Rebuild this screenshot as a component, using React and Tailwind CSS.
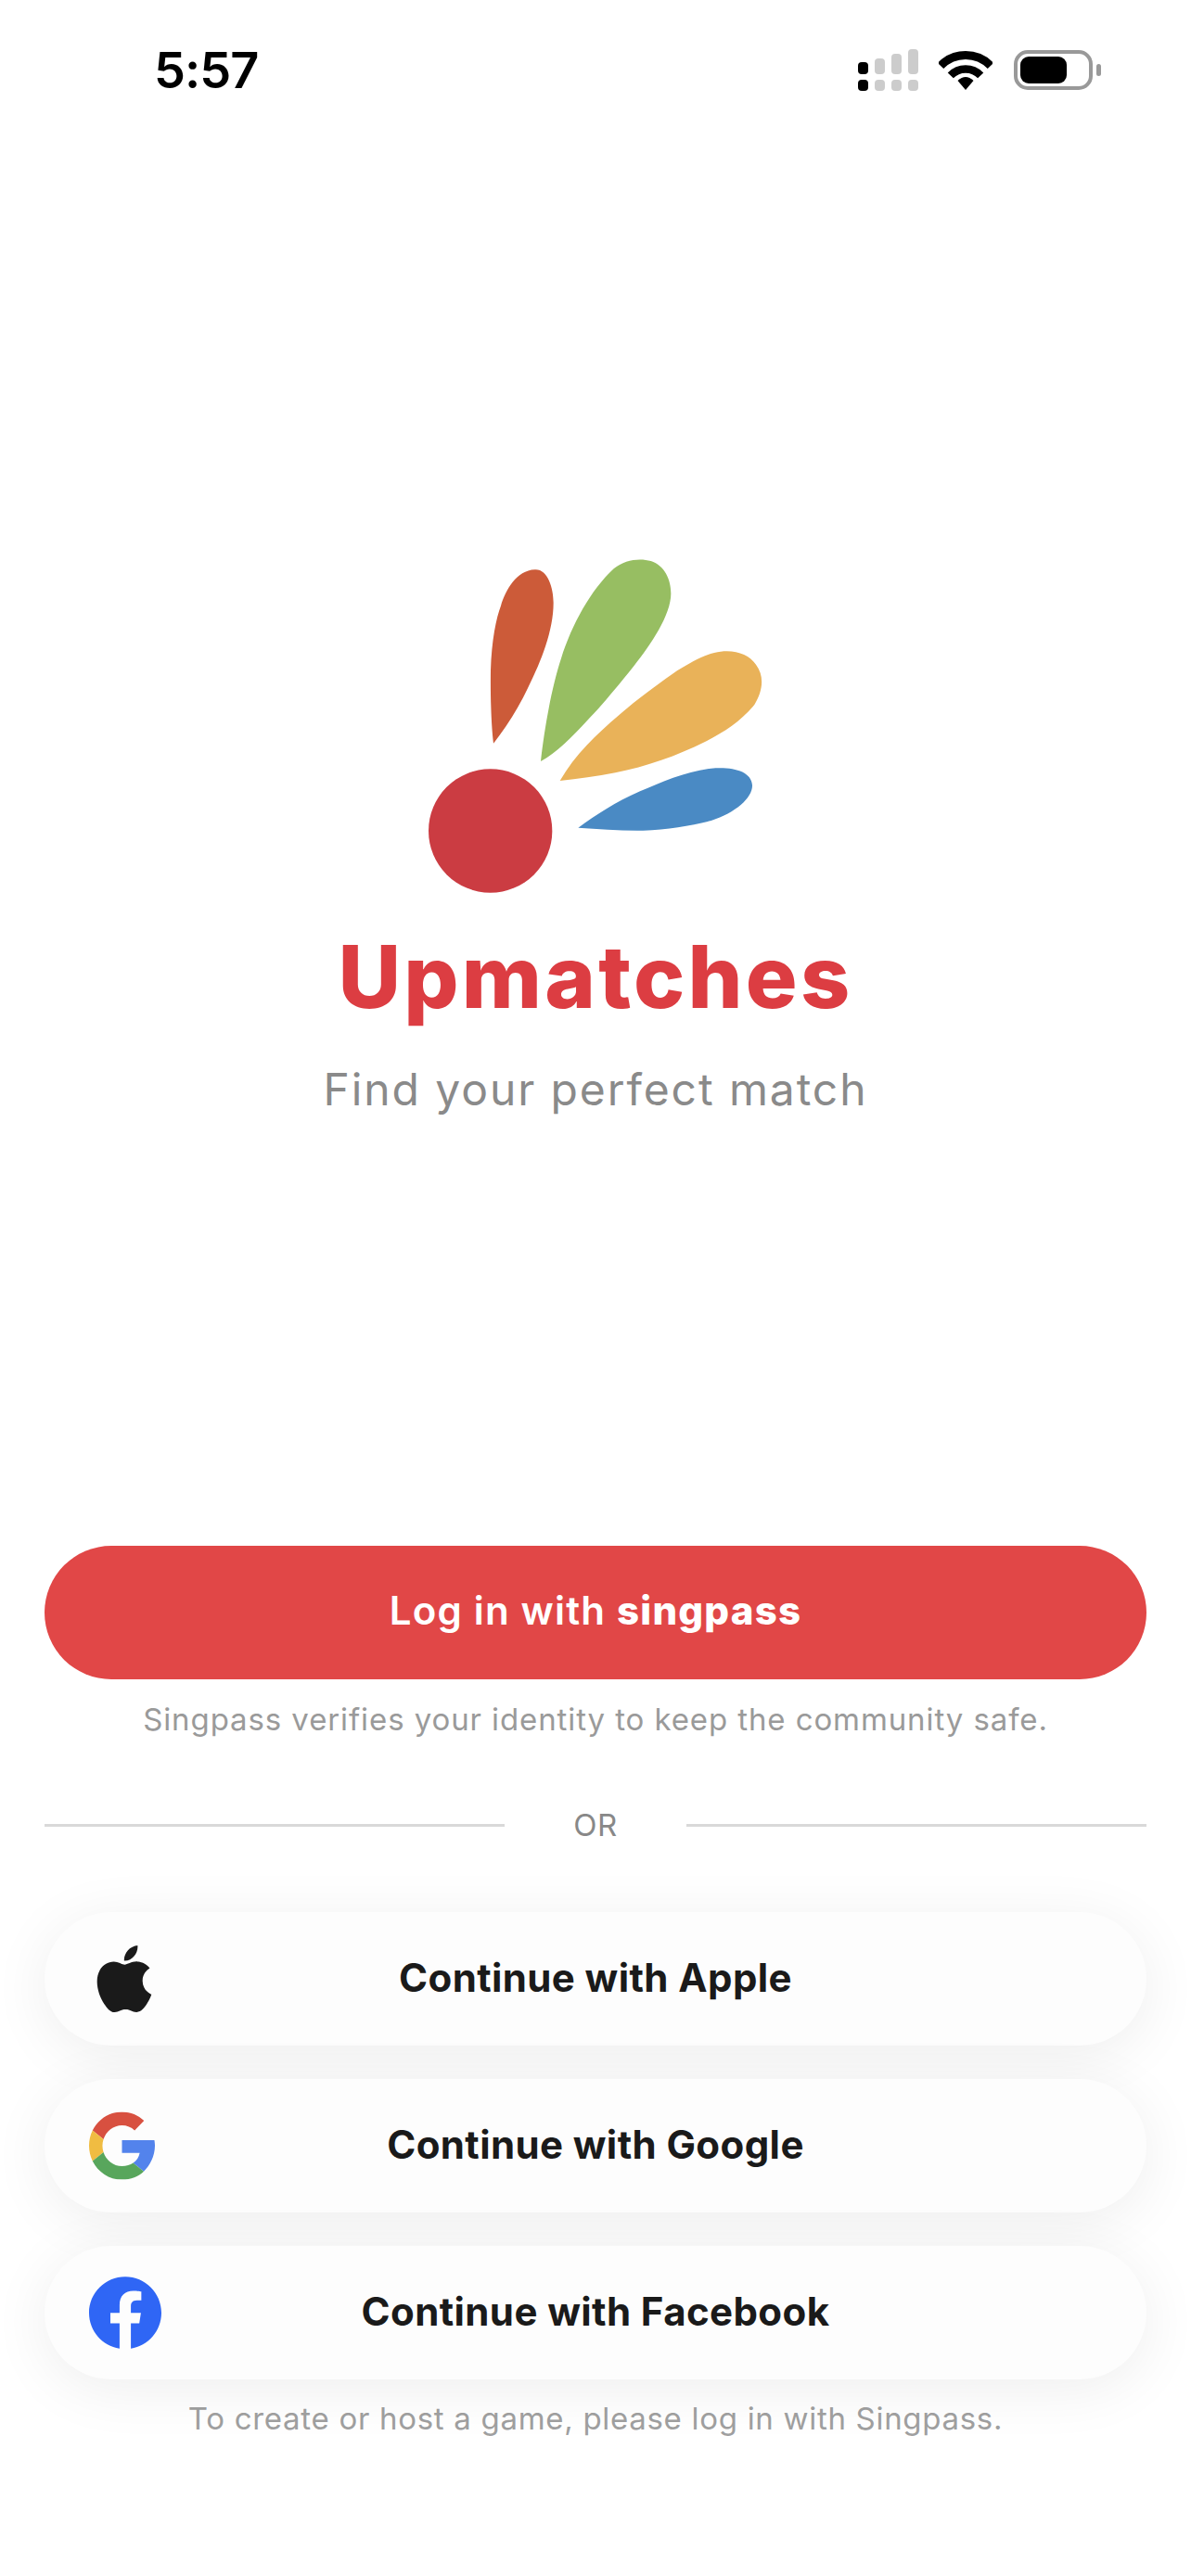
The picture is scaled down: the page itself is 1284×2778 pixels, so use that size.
import { SiApple } from 'react-icons/si';

const font = { fontFamily: 'Inter, "Liberation Sans", sans-serif' };

function SignalIcon() {
  const cols = [
    { x: 0, top: 14, fill: '#000' },
    { x: 18, top: 10, fill: '#ccc' },
    { x: 36, top: 5, fill: '#ccc' },
    { x: 54, top: 0, fill: '#ccc' },
  ];
  return (
    <svg width="66" height="45" viewBox="0 0 66 45">
      {cols.map((c) => (
        <g key={c.x} fill={c.fill}>
          <rect x={c.x} y={c.top} width="11" height={27 - c.top} rx="4" />
          <rect x={c.x} y="33" width="11" height="12" rx="4" />
        </g>
      ))}
    </svg>
  );
}

function WifiIcon() {
  return (
    <svg width="58" height="42" viewBox="0 0 58 42" fill="none" stroke="#000">
      <path d="M2 16 A37.5 37.5 0 0 1 56 16" strokeWidth="9" />
      <path d="M12.8 26.4 A22.5 22.5 0 0 1 45.2 26.4" strokeWidth="8.5" />
      <path d="M29 42 L20.5 32 Q29 24 37.5 32 Z" fill="#000" stroke="none" />
    </svg>
  );
}

function BatteryIcon() {
  return (
    <svg width="94" height="43" viewBox="0 0 94 43">
      <rect x="2" y="2" width="81" height="39" rx="13" fill="none" stroke="#999" strokeWidth="4" />
      <rect x="7" y="7" width="50" height="29" rx="9" fill="#000" />
      <rect x="89" y="15" width="5" height="13" rx="2.5" fill="#999" />
    </svg>
  );
}

function Logo() {
  return (
    <svg width="420" height="400" viewBox="0 0 1260 1200" className="mr-[4px]">
      <path fill="#CC5B39" d="M306 665 C298 600 296 500 297 430 C300 330 315 260 330 220 C345 170 380 105 440 103 C480 100 500 160 500 210 C500 300 460 400 420 480 C385 555 345 615 306 665 Z" />
      <path fill="#97BE62" d="M459 723 C470 620 495 480 525 390 C560 280 620 170 695 100 C730 70 780 65 815 75 C860 90 880 135 880 180 C880 250 815 345 760 415 C700 490 650 550 610 590 C560 645 510 695 459 723 Z" />
      <path fill="#E9B259" d="M521 786 C570 700 640 635 710 575 C780 515 850 465 900 430 C940 405 985 380 1020 372 C1080 358 1130 375 1155 410 C1185 450 1175 500 1150 540 C1110 590 1050 630 990 660 C900 705 800 740 700 760 C640 772 580 780 521 786 Z" />
      <path fill="#4A8AC4" d="M580 938 C640 895 700 855 780 820 C850 790 930 755 1010 746 C1080 740 1140 755 1143 800 C1145 840 1090 890 1010 915 C950 930 870 945 790 947 C720 948 650 943 580 938 Z" />
      <circle cx="296" cy="948" r="200" fill="#CB3C42" />
    </svg>
  );
}

function GoogleIcon() {
  return (
    <svg width="71" height="73" viewBox="0 0 48 48" preserveAspectRatio="none">
      <path fill="#D85040" d="M24 9.5c3.54 0 6.71 1.22 9.21 3.6l6.85-6.85C35.9 2.38 30.47 0 24 0 14.62 0 6.51 5.38 2.56 13.22l7.98 6.19C12.43 13.72 17.74 9.5 24 9.5z" />
      <path fill="#5383EC" d="M48 24c0-1.57-.15-2.54-.38-4H24v9.02h12.94c-.58 2.96-2.26 5.48-4.78 7.18l7.73 6C44.4 38.02 48 31.29 48 24z" />
      <path fill="#F0BC42" d="M10.53 28.59c-.48-1.45-.76-2.99-.76-4.59s.27-3.14.76-4.59l-7.98-6.19C.92 16.46 0 20.12 0 24c0 3.88.92 7.54 2.56 10.78l7.97-6.19z" />
      <path fill="#58A65C" d="M24 48c6.48 0 11.93-2.13 15.89-5.81l-7.73-6c-2.15 1.45-4.92 2.3-8.16 2.3-6.26 0-11.57-4.22-13.47-9.91l-7.98 6.19C6.51 42.62 14.62 48 24 48z" />
    </svg>
  );
}

function FacebookIcon() {
  return (
    <svg width="78" height="78" viewBox="0 0 24 24">
      <path fill="#2F66F5" d="M24 12.073c0-6.627-5.373-12-12-12s-12 5.373-12 12c0 5.99 4.388 10.954 10.125 11.854v-8.385H7.078v-3.47h3.047V9.43c0-3.007 1.792-4.669 4.533-4.669 1.312 0 2.686.235 2.686.235v2.953H15.83c-1.491 0-1.956.925-1.956 1.874v2.25h3.328l-.532 3.47h-2.796v8.385C19.612 23.027 24 18.062 24 12.073z" />
    </svg>
  );
}

function SocialButton({ label, iconClass, children }) {
  return (
    <button className="relative h-[144px] w-full rounded-[72px] bg-[#fdfdfd] shadow-[0_10px_64px_rgba(0,0,0,0.07)] flex items-center justify-center">
      <span className={`absolute top-1/2 -translate-y-1/2 flex ${iconClass}`}>{children}</span>
      <span className="text-[42px] leading-[50px] -mt-[3px] font-bold text-[#1a1a1a] tracking-[0.4px]">{label}</span>
    </button>
  );
}

export default function App() {
  return (
    <div style={font} className="w-full h-[2778px] bg-white flex flex-col overflow-hidden">
      {/* Status bar */}
      <div className="h-[98px] pt-[53px] pl-[166px] pr-[97px] flex items-center justify-between">
        <span className="text-[54px] font-semibold text-black leading-none tracking-[-1px]">5:57</span>
        <div className="flex items-center">
          <SignalIcon />
          <div className="ml-[21px] flex"><WifiIcon /></div>
          <div className="ml-[23px] flex"><BatteryIcon /></div>
        </div>
      </div>

      {/* Logo + title */}
      <div className="mt-[482px] flex flex-col items-center">
        <Logo />
        <h1 className="mt-[18px] text-[93px] leading-[110px] font-extrabold text-[#DC3D42] tracking-[3.2px]">Upmatches</h1>
        <p className="mt-[38px] text-[48px] leading-[58px] text-[#8a8a8a] tracking-[1.9px]">Find your perfect match</p>
      </div>

      {/* Actions */}
      <div className="mt-auto mb-[150px] px-[48px] flex flex-col">
        <button className="h-[144px] w-full rounded-[72px] bg-[#E14747] text-white text-[42px] font-semibold tracking-[1.2px] flex items-center justify-center">
          <span className="flex items-center -mt-[5px]">
            Log in with&nbsp;<span className="font-extrabold">singpass</span>
          </span>
        </button>
        <p className="mt-[23px] text-center text-[33px] leading-[40px] text-[#9a9a9a] tracking-[0.9px]">
          Singpass verifies your identity to keep the community safe.
        </p>
        <div className="mt-[74px] flex items-center">
          <div className="flex-1 h-[3px] bg-[#d9d9d9]" />
          <span className="w-[196px] text-center text-[33px] leading-[40px] text-[#888888] tracking-[0.5px]">OR</span>
          <div className="flex-1 h-[3px] bg-[#d9d9d9]" />
        </div>
        <div className="mt-[74px] flex flex-col gap-[36px]">
          <SocialButton label="Continue with Apple" iconClass="left-[50px]">
            <SiApple size={72} color="#1a1a1a" />
          </SocialButton>
          <SocialButton label="Continue with Google" iconClass="left-[48px]">
            <GoogleIcon />
          </SocialButton>
          <SocialButton label="Continue with Facebook" iconClass="left-[48px]">
            <FacebookIcon />
          </SocialButton>
        </div>
        <p className="mt-[22px] text-center text-[33px] leading-[40px] text-[#a0a0a0] tracking-[0.7px]">
          To create or host a game, please log in with Singpass.
        </p>
      </div>
    </div>
  );
}
